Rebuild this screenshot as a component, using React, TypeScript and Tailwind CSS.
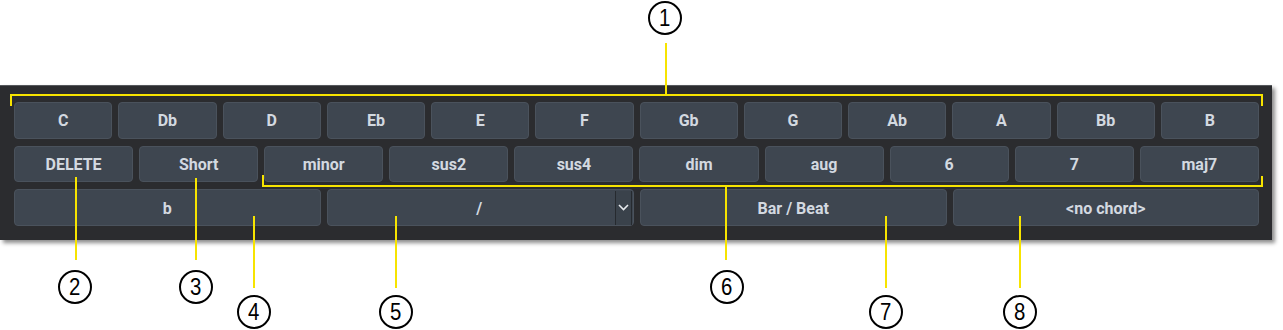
import React from 'react';

const notes = ['C', 'Db', 'D', 'Eb', 'E', 'F', 'Gb', 'G', 'Ab', 'A', 'Bb', 'B'];
const kinds = ['DELETE', 'Short', 'minor', 'sus2', 'sus4', 'dim', 'aug', '6', '7', 'maj7'];

function Key({ label }: { label: string }) {
  return (
    <button className="flex-1 min-w-0 h-full pt-[2px] rounded-[4px] border border-[#4a525c] bg-[#3e4650] text-[#d3d9e0] text-[16px] font-bold flex items-center justify-center">
      {label}
    </button>
  );
}

// numbered callout bubble
function Bubble({ n, x, y }: { n: number; x: number; y: number }) {
  return (
    <div
      className="absolute w-[34px] h-[34px] -translate-x-1/2 -translate-y-1/2 rounded-full border-2 border-black bg-white flex items-center justify-center text-[24px] leading-none text-black font-['Liberation_Sans',sans-serif]"
      style={{ left: x, top: y }}
    >
      <span className="scale-x-[0.85]">{n}</span>
    </div>
  );
}

function VLine({ x, y1, y2 }: { x: number; y1: number; y2: number }) {
  return <div className="absolute w-[2px] bg-[#f7e400]" style={{ left: x - 1, top: y1, height: y2 - y1 }} />;
}

function HLine({ y, x1, x2 }: { y: number; x1: number; x2: number }) {
  return <div className="absolute h-[2px] bg-[#f7e400]" style={{ top: y - 1, left: x1, width: x2 - x1 }} />;
}

export default function App() {
  return (
    <div className="relative w-[1283px] h-[330px] bg-white overflow-hidden font-['Roboto','Liberation_Sans',sans-serif]">
      {/* panel */}
      <div className="mt-[85px] w-[1272px] h-[155px] bg-[#2b2c2f] border-t border-[#55585c] shadow-[3px_3px_4px_rgba(0,0,0,0.45)] pl-[14px] pr-[13px] pt-[16px] pb-[14px] flex flex-col gap-[7px]">
        <div className="flex gap-[6px] h-[37px]">
          {notes.map((n) => (
            <Key key={n} label={n} />
          ))}
        </div>
        <div className="flex gap-[6px] h-[37px]">
          {kinds.map((k) => (
            <Key key={k} label={k} />
          ))}
        </div>
        <div className="flex gap-[6px] h-[37px]">
          <Key label="b" />
          <div className="flex-1 min-w-0 h-full rounded-[4px] border border-[#4a525c] bg-[#3e4650] text-[#d3d9e0] text-[16px] font-bold flex items-center pr-[1px]">
            <span className="flex-1 text-center pl-[16px] pt-[2px]">/</span>
            <span className="w-[17px] h-[34px] border-l border-r border-[#262a2f] bg-[#3a424b] flex items-center justify-center">
              <svg width="11" height="7" viewBox="0 0 11 7">
                <path d="M1 1 L5.5 5.5 L10 1" fill="none" stroke="#e6eaee" strokeWidth="1.6" />
              </svg>
            </span>
          </div>
          <Key label="Bar / Beat" />
          <Key label="<no chord>" />
        </div>
      </div>

      {/* annotations */}
      <HLine y={95} x1={10} x2={1263} />
      <VLine x={11} y1={94} y2={106} />
      <VLine x={1262} y1={94} y2={106} />
      <VLine x={666} y1={43} y2={95} />
      <Bubble n={1} x={665} y={18} />

      <HLine y={186} x1={262} x2={1263} />
      <VLine x={263} y1={175} y2={186} />
      <VLine x={1262} y1={176} y2={186} />

      <VLine x={76} y1={177} y2={260} />
      <VLine x={196} y1={178} y2={260} />
      <VLine x={254} y1={216} y2={288} />
      <VLine x={396} y1={216} y2={288} />
      <VLine x={726} y1={186} y2={260} />
      <VLine x={886} y1={216} y2={288} />
      <VLine x={1020} y1={216} y2={288} />

      <Bubble n={2} x={75} y={287} />
      <Bubble n={3} x={196} y={287} />
      <Bubble n={4} x={254} y={312} />
      <Bubble n={5} x={396} y={312} />
      <Bubble n={6} x={727} y={287} />
      <Bubble n={7} x={886} y={312} />
      <Bubble n={8} x={1020} y={312} />
    </div>
  );
}
